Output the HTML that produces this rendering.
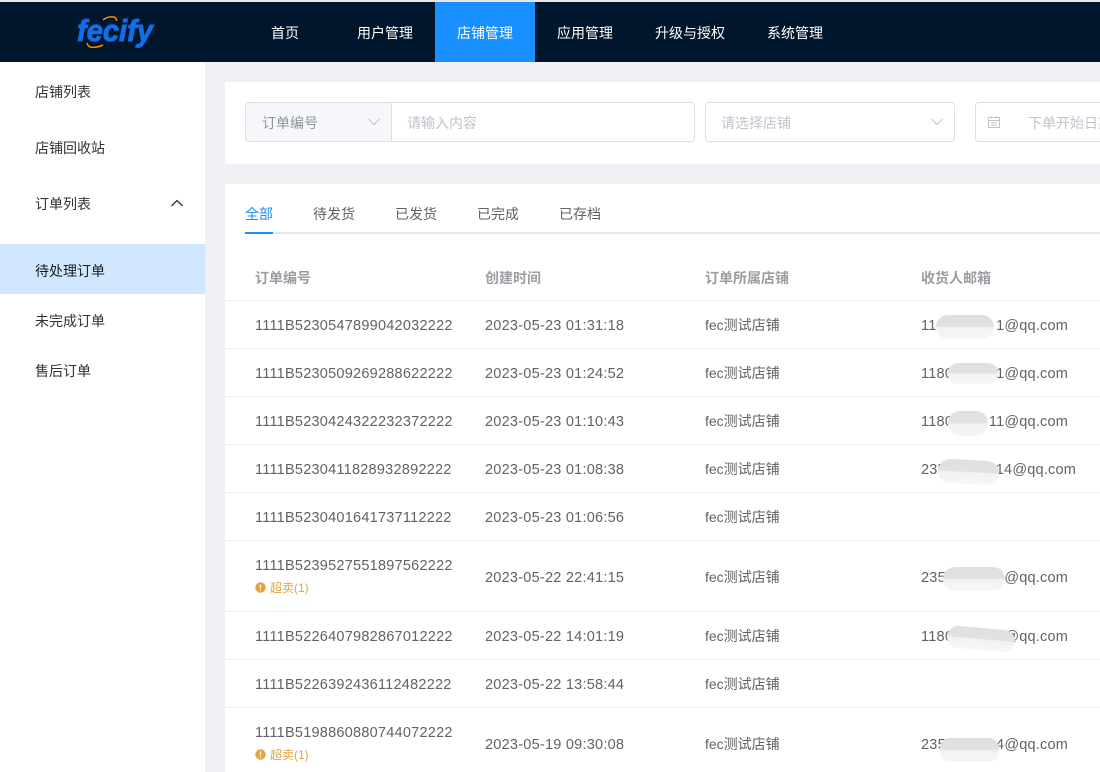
<!DOCTYPE html>
<html><head><meta charset="utf-8">
<style>
html,body{margin:0;padding:0;width:1100px;height:772px;overflow:hidden;background:#f0eff4;font-family:"Liberation Sans","Noto Sans CJK SC",sans-serif;font-size:14px;color:#606266}
.a{position:absolute;white-space:nowrap}
.t{position:absolute;white-space:nowrap;line-height:20px;font-size:14.500px;letter-spacing:.24px;margin-top:1px}
.e{position:absolute;white-space:nowrap;line-height:20px;font-size:14.500px;letter-spacing:.2px;text-align:right;margin-top:1px}
.nav{position:absolute;top:2px;height:60px;line-height:63px;color:#fff;text-align:center;font-size:14px}
.side{position:absolute;left:35px;line-height:20px;color:#303133;margin-top:1px}
.line{position:absolute;left:225px;width:875px;height:1px;background:#ebeef5}
.th{position:absolute;top:268px;line-height:20px;color:#9a9da2;font-weight:700}
.t.shop{font-size:14px;letter-spacing:0;margin-top:0}
.ph{margin-top:1px}
.b{position:absolute;background:linear-gradient(#dfdfe1 0,#e2e2e3 48%,#f2f2f3 52%,#f6f6f7 100%);}
</style></head><body>
<div class="a" style="left:0;top:0;width:1100px;height:2px;background:#e8e8ea"></div>
<div class="a" style="left:0;top:2px;width:1100px;height:60px;background:#00162c"></div>
<svg class="a" style="left:70px;top:10px" width="90" height="44" viewBox="0 0 90 44">
<text x="7" y="31" font-family="Liberation Sans" font-weight="700" font-style="italic" font-size="31" fill="#0f6fe8" stroke="#0f6fe8" stroke-width=".9" textLength="76" lengthAdjust="spacingAndGlyphs">fecify</text>
<path d="M33 10 C38 6 47 5 46.500 11" fill="none" stroke="#f08c00" stroke-width="1.500"/>
<path d="M17 33 C18 39 26 38 33 35" fill="none" stroke="#f08c00" stroke-width="1.500"/>
</svg>
<div class="nav" style="left:271px;width:28px">首页</div>
<div class="nav" style="left:357px;width:56px">用户管理</div>
<div class="nav" style="left:435px;width:100px;background:#1890ff">店铺管理</div>
<div class="nav" style="left:557px;width:56px">应用管理</div>
<div class="nav" style="left:655px;width:70px">升级与授权</div>
<div class="nav" style="left:767px;width:56px">系统管理</div>

<div class="a" style="left:0;top:62px;width:205px;height:710px;background:#fff"></div>
<div class="side" style="top:81px">店铺列表</div>
<div class="side" style="top:137px">店铺回收站</div>
<div class="side" style="top:193px">订单列表</div>
<svg class="a" style="left:170px;top:197px" width="14" height="12" viewBox="0 0 14 12"><path d="M1.500 9 L7 3.500 L12.500 9" fill="none" stroke="#303133" stroke-width="1.300"/></svg>
<div class="a" style="left:0;top:244px;width:205px;height:50px;background:#d0e7ff"></div>
<div class="side" style="top:260px;color:#1b1d20">待处理订单</div>
<div class="side" style="top:310px">未完成订单</div>
<div class="side" style="top:360px">售后订单</div>

<div class="a" style="left:225px;top:82px;width:875px;height:82px;background:#fff"></div>
<div class="a" style="left:245px;top:102px;width:147px;height:40px;box-sizing:border-box;background:#f5f7fa;border:1px solid #dcdfe6;border-radius:4px 0 0 4px"></div>
<div class="a ph" style="left:262px;top:112px;line-height:20px;color:#909399">订单编号</div>
<svg class="a" style="left:367px;top:116px" width="14" height="12" viewBox="0 0 14 12"><path d="M1.500 3 L7 8.500 L12.500 3" fill="none" stroke="#c0c4cc" stroke-width="1"/></svg>
<div class="a" style="left:391px;top:102px;width:304px;height:40px;box-sizing:border-box;background:#fff;border:1px solid #dcdfe6;border-radius:0 4px 4px 0"></div>
<div class="a ph" style="left:407px;top:112px;line-height:20px;color:#c0c4cc">请输入内容</div>
<div class="a" style="left:705px;top:102px;width:250px;height:40px;box-sizing:border-box;background:#fff;border:1px solid #dcdfe6;border-radius:4px"></div>
<div class="a ph" style="left:721px;top:112px;line-height:20px;color:#c0c4cc">请选择店铺</div>
<svg class="a" style="left:930px;top:116px" width="14" height="12" viewBox="0 0 14 12"><path d="M1.500 3 L7 8.500 L12.500 3" fill="none" stroke="#c0c4cc" stroke-width="1"/></svg>
<div class="a" style="left:975px;top:102px;width:200px;height:40px;box-sizing:border-box;background:#fff;border:1px solid #dcdfe6;border-radius:4px"></div>
<svg class="a" style="left:987px;top:115px" width="14" height="14" viewBox="0 0 14 14"><path d="M1.500 2.500H12.500V12.500H1.500Z M1.500 5.500H12.500 M4 1V3 M10 1V3 M4 8H10 M4 10.300H10" fill="none" stroke="#c0c4cc" stroke-width="1"/></svg>
<div class="a ph" style="left:1028px;top:112px;line-height:20px;color:#c0c4cc">下单开始日期</div>

<div class="a" style="left:225px;top:184px;width:875px;height:588px;background:#fff"></div>
<div class="a" style="left:245px;top:204px;line-height:20px;color:#1890ff">全部</div>
<div class="a" style="left:313px;top:204px;line-height:20px;color:#606266">待发货</div>
<div class="a" style="left:395px;top:204px;line-height:20px;color:#606266">已发货</div>
<div class="a" style="left:477px;top:204px;line-height:20px;color:#606266">已完成</div>
<div class="a" style="left:559px;top:204px;line-height:20px;color:#606266">已存档</div>
<div class="a" style="left:245px;top:232px;width:855px;height:2px;background:#e4e7ed"></div>
<div class="a" style="left:245px;top:232px;width:28px;height:2px;background:#1890ff"></div>

<div class="th" style="left:255px">订单编号</div>
<div class="th" style="left:485px">创建时间</div>
<div class="th" style="left:705px">订单所属店铺</div>
<div class="th" style="left:921px">收货人邮箱</div>

<div class="line" style="top:300px"></div>
<div class="line" style="top:348px"></div>
<div class="line" style="top:396px"></div>
<div class="line" style="top:444px"></div>
<div class="line" style="top:492px"></div>
<div class="line" style="top:540px"></div>
<div class="line" style="top:611px"></div>
<div class="line" style="top:659px"></div>
<div class="line" style="top:707px"></div>

<div class="t" style="left:255px;top:315px">1111B5230547899042032222</div><div class="t" style="left:485px;top:315px">2023-05-23 01:31:18</div><div class="t shop" style="left:705px;top:315px">fec测试店铺</div><div class="t" style="left:921px;top:315px">11</div><div class="e" style="right:32px;top:315px">1@qq.com</div>
<div class="t" style="left:255px;top:363px">1111B5230509269288622222</div><div class="t" style="left:485px;top:363px">2023-05-23 01:24:52</div><div class="t shop" style="left:705px;top:363px">fec测试店铺</div><div class="t" style="left:921px;top:363px">1180</div><div class="e" style="right:32px;top:363px">1@qq.com</div>
<div class="t" style="left:255px;top:411px">1111B5230424322232372222</div><div class="t" style="left:485px;top:411px">2023-05-23 01:10:43</div><div class="t shop" style="left:705px;top:411px">fec测试店铺</div><div class="t" style="left:921px;top:411px">1180</div><div class="e" style="right:32px;top:411px">11@qq.com</div>
<div class="t" style="left:255px;top:459px">1111B5230411828932892222</div><div class="t" style="left:485px;top:459px">2023-05-23 01:08:38</div><div class="t shop" style="left:705px;top:459px">fec测试店铺</div><div class="t" style="left:921px;top:459px">235</div><div class="e" style="right:24px;top:459px">014@qq.com</div>
<div class="t" style="left:255px;top:507px">1111B5230401641737112222</div><div class="t" style="left:485px;top:507px">2023-05-23 01:06:56</div><div class="t shop" style="left:705px;top:507px">fec测试店铺</div>
<div class="t" style="left:255px;top:555px">1111B5239527551897562222</div><div class="t" style="left:485px;top:567px">2023-05-22 22:41:15</div><div class="t shop" style="left:705px;top:567px">fec测试店铺</div><div class="t" style="left:921px;top:567px">235</div><div class="e" style="right:32px;top:567px">@qq.com</div>
<div class="t" style="left:255px;top:626px">1111B5226407982867012222</div><div class="t" style="left:485px;top:626px">2023-05-22 14:01:19</div><div class="t shop" style="left:705px;top:626px">fec测试店铺</div><div class="t" style="left:921px;top:626px">1180</div><div class="e" style="right:32px;top:626px">1@qq.com</div>
<div class="t" style="left:255px;top:674px">1111B5226392436112482222</div><div class="t" style="left:485px;top:674px">2023-05-22 13:58:44</div><div class="t shop" style="left:705px;top:674px">fec测试店铺</div>
<div class="t" style="left:255px;top:722px">1111B5198860880744072222</div><div class="t" style="left:485px;top:734px">2023-05-19 09:30:08</div><div class="t shop" style="left:705px;top:734px">fec测试店铺</div><div class="t" style="left:921px;top:734px">235</div><div class="e" style="right:32px;top:734px">0014@qq.com</div>

<svg class="a" style="left:255px;top:582px" width="11" height="11" viewBox="0 0 11 11"><circle cx="5.500" cy="5.500" r="5.200" fill="#e6a23c"/><path d="M5.500 2.500V6.200M5.500 7.400V8.600" stroke="#fff" stroke-width="1.300"/></svg>
<div class="a" style="left:270px;top:578px;line-height:20px;font-size:12px;color:#e6a23c">超卖(1)</div>
<svg class="a" style="left:255px;top:749px" width="11" height="11" viewBox="0 0 11 11"><circle cx="5.500" cy="5.500" r="5.200" fill="#e6a23c"/><path d="M5.500 2.500V6.200M5.500 7.400V8.600" stroke="#fff" stroke-width="1.300"/></svg>
<div class="a" style="left:270px;top:745px;line-height:20px;font-size:12px;color:#e6a23c">超卖(1)</div>

<div class="b" style="left:936px;top:315px;width:58px;height:24px;border-radius:12px"></div>
<div class="b" style="left:948px;top:363px;width:50px;height:21px;border-radius:10px"></div>
<div class="b" style="left:948px;top:411px;width:40px;height:25px;border-radius:12px"></div>
<div class="b" style="left:938px;top:460px;width:61px;height:24px;border-radius:12px;transform:rotate(3deg)"></div>
<div class="b" style="left:943px;top:567px;width:62px;height:24px;border-radius:12px"></div>
<div class="b" style="left:947px;top:628px;width:68px;height:22px;border-radius:11px;transform:rotate(5deg)"></div>
<div class="b" style="left:940px;top:738px;width:59px;height:24px;border-radius:10px"></div>
</body></html>
